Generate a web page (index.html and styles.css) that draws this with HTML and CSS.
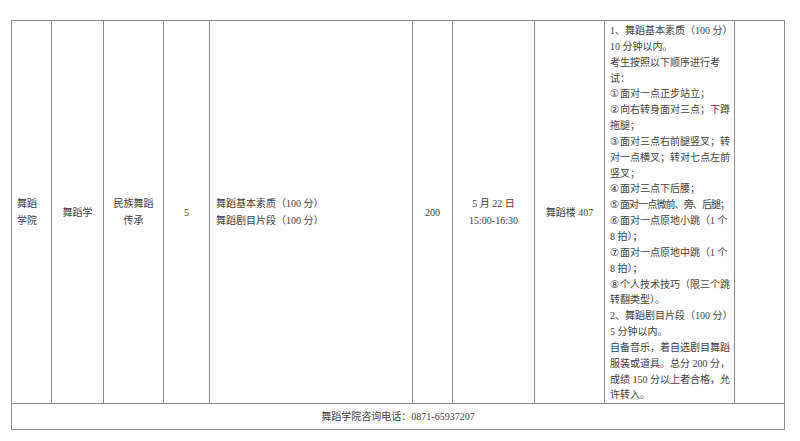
FILE: index.html
```html
<!DOCTYPE html>
<html lang="zh">
<head>
<meta charset="utf-8">
<title>舞蹈学院</title>
<link rel="stylesheet" href="styles.css">
</head>
<body>
<table class="grid">
  <colgroup>
    <col class="c1"><col class="c2"><col class="c3"><col class="c4"><col class="c5">
    <col class="c6"><col class="c7"><col class="c8"><col class="c9"><col class="c10">
  </colgroup>
  <tr class="main">
    <td class="left">舞蹈<br>学院</td>
    <td class="center">舞蹈学</td>
    <td class="center">民族舞蹈<br>传承</td>
    <td class="center">5</td>
    <td class="left wide">舞蹈基本素质（100 分）<br>舞蹈剧目片段（100 分）</td>
    <td class="center">200</td>
    <td class="center">5 月 22 日<br>15:00-16:30</td>
    <td class="center">舞蹈楼 407</td>
    <td class="detail">
      <div>1、舞蹈基本素质（100 分）</div>
      <div>10 分钟以内。</div>
      <div>考生按照以下顺序进行考</div>
      <div>试：</div>
      <div><span class="n">①</span>面对一点正步站立；</div>
      <div><span class="n">②</span>向右转身面对三点；下蹲</div>
      <div>拖腿；</div>
      <div><span class="n">③</span>面对三点右前腿竖叉；转</div>
      <div>对一点横叉；转对七点左前</div>
      <div>竖叉；</div>
      <div><span class="n">④</span>面对三点下后腰；</div>
      <div class="tight"><span class="n">⑤</span>面对一点微前、旁、后腿；</div>
      <div><span class="n">⑥</span>面对一点原地小跳（1 个</div>
      <div>8 拍）；</div>
      <div><span class="n">⑦</span>面对一点原地中跳（1 个</div>
      <div>8 拍）；</div>
      <div><span class="n">⑧</span>个人技术技巧（限三个跳</div>
      <div>转翻类型）。</div>
      <div>2、舞蹈剧目片段（100 分）</div>
      <div>5 分钟以内。</div>
      <div>自备音乐，着自选剧目舞蹈</div>
      <div>服装或道具。总分 200 分，</div>
      <div>成绩 150 分以上者合格，允</div>
      <div>许转入。</div>
    </td>
    <td></td>
  </tr>
  <tr class="foot">
    <td colspan="10">舞蹈学院咨询电话：0871-65937207</td>
  </tr>
</table>
</body>
</html>
```

FILE: styles.css
```css
html, body {
  margin: 0;
  background: #ffffff;
}
body {
  padding: 20px 0 0 11px;
  font-family: "Liberation Serif", "Noto Sans CJK SC", serif;
  font-size: 10px;
  color: #404040;
}
.grid {
  border-collapse: collapse;
  table-layout: fixed;
  width: 774px;
}
.grid td {
  border: 1px solid #8c8c8c;
  padding: 0;
  vertical-align: middle;
  line-height: 17px;
}
.c1 { width: 40px; }
.c2 { width: 52px; }
.c3 { width: 60px; }
.c4 { width: 46px; }
.c5 { width: 203px; }
.c6 { width: 40px; }
.c7 { width: 82px; }
.c8 { width: 70px; }
.c9 { width: 130px; }
.c10 { width: 50px; }
.main { height: 383px; }
.foot { height: 26px; }
.grid .left {
  text-align: left;
  padding-left: 5px;
}
.grid .wide {
  padding-left: 6px;
}
.grid .center {
  text-align: center;
}
.grid .detail {
  padding: 2px 0 0 5px;
  line-height: 15.85px;
  white-space: nowrap;
  vertical-align: top;
}
.detail div {
  height: 15.85px;
  overflow: visible;
}
.detail .n {
  display: inline-block;
  width: 10px;
  font-family: "DejaVu Sans", sans-serif;
  font-size: 10.5px;
  line-height: 10px;
  text-align: left;
}
.detail .tight {
  letter-spacing: -0.9px;
}
.grid .foot td {
  text-align: center;
}
```
